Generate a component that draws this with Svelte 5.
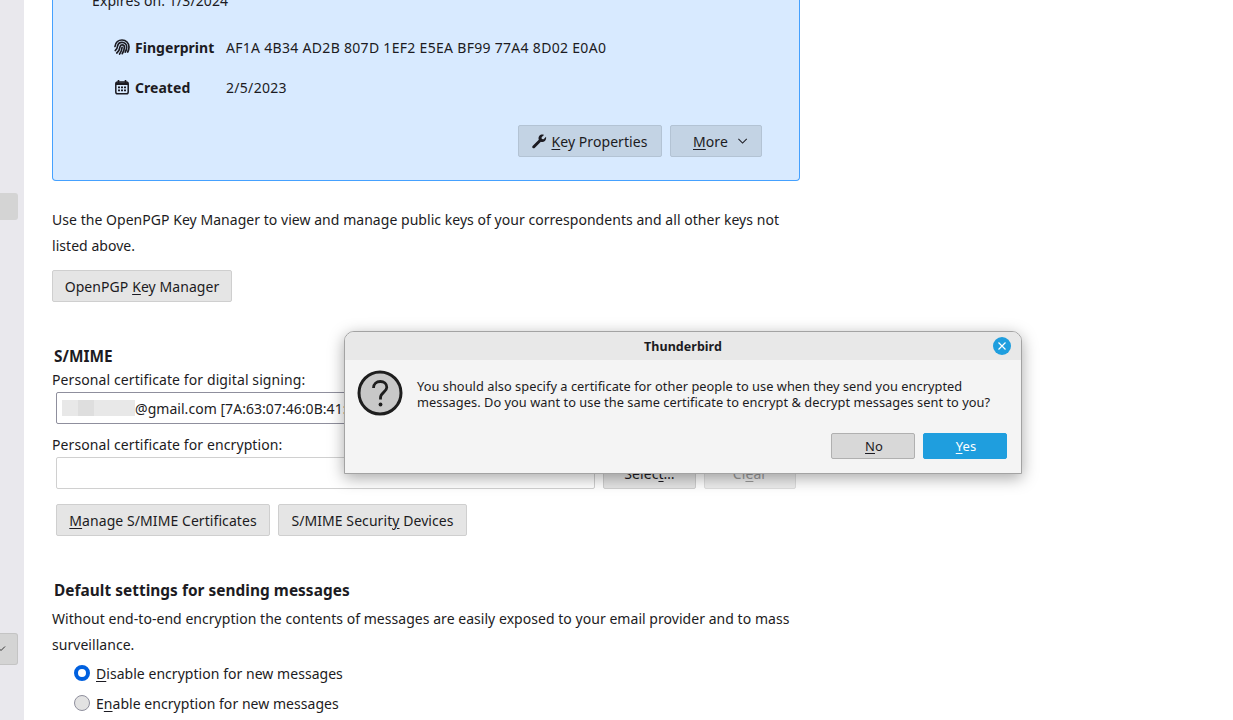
<script>
	const fingerprint = 'AF1A 4B34 AD2B 807D 1EF2 E5EA BF99 77A4 8D02 E0A0';
</script>

<div class="page">
	<aside class="side">
		<div class="side-item first"></div>
		<div class="side-item second">
			<svg width="10" height="10" viewBox="0 0 10 10" class="side-chev">
				<path d="M-3 2.5 1 6.5 5 2.5" fill="none" stroke="#333" stroke-width="1" />
			</svg>
		</div>
	</aside>

	<main class="main">
		<section class="card">
			<p class="expires">Expires on: 1/3/2024</p>
			<div class="meta">
				<svg width="16" height="16" viewBox="0 0 16 16" class="meta-icon">
					<g fill="none" stroke="#1c1b22" stroke-width="1.7" stroke-linecap="round">
						<path d="M1 7.500C1.500 3.500 4.500 1 8 1c4 0 7 3 7 7 0 1.800-.5 3.500-1.300 5" />
						<path d="M1.300 11.500C3 10.500 3.400 8.500 3.600 7 4 4.800 5.800 3.400 8 3.400c2.600 0 4.700 2 4.700 4.600 0 1.700-.5 3.500-1.400 5.200" />
						<path d="M2.800 14C4.800 12.500 5.700 10 6 7.800 6.200 6.600 7 5.800 8 5.800c1.400 0 2.400 1 2.400 2.300 0 2.300-.8 4.800-2.200 6.600" />
						<path d="M5.600 15C7 13.200 7.900 10.800 8.100 8.300" />
					</g>
				</svg>
				<span class="meta-label">Fingerprint</span>
				<span class="meta-value">{fingerprint}</span>
			</div>
			<div class="meta">
				<svg width="16" height="16" viewBox="0 0 16 16" class="meta-icon">
					<path d="M4.500 1v3M11.500 1v3" stroke="#1c1b22" stroke-width="1.600" fill="none" />
					<rect x="1.800" y="3" width="12.400" height="11.700" rx="1.800" fill="none" stroke="#1c1b22" stroke-width="1.500" />
					<path d="M2 3.500h12v2.500H2z" fill="#1c1b22" />
					<path d="M4 7.500h2v1.800H4zM7 7.500h2v1.800H7zM10 7.500h2v1.800h-2zM4 10.500h2v1.800H4zM7 10.500h2v1.800H7zM10 10.500h2v1.800h-2z" fill="#1c1b22" />
				</svg>
				<span class="meta-label">Created</span>
				<span class="meta-value">2/5/2023</span>
			</div>
			<div class="card-actions">
				<button class="btn on-card key-props">
					<svg width="15" height="15" viewBox="0 0 15 15">
						<path d="M14 2.800 11.600 5.200 9.800 5 9.600 3.200 12 .9C10.300.2 8.400.6 7.400 1.800 6.400 3 6.300 4.500 6.800 5.700L.8 11.700c-.7.700-.7 1.600-.1 2.200.6.600 1.500.6 2.200-.1l6-6c1.200.5 2.800.3 4-.8 1.100-1.100 1.500-2.800 1.100-4.200z" fill="#1c1b22" />
					</svg>
					<span><u>K</u>ey Properties</span>
				</button>
				<button class="btn on-card more">
					<span><u>M</u>ore</span>
					<svg width="12" height="12" viewBox="0 0 12 12">
						<path d="M1.500 3.800 6 8.300l4.500-4.500" fill="none" stroke="#1c1b22" stroke-width="1.100" />
					</svg>
				</button>
			</div>
		</section>

		<p class="para intro">
			Use the OpenPGP Key Manager to view and manage public keys of your correspondents and all other keys not listed above.
		</p>
		<button class="btn manager"><span>OpenPGP <u>K</u>ey Manager</span></button>

		<h2 class="heading smime">S/MIME</h2>
		<div class="field-label sign">Personal certificate for digital signing:</div>
		<div class="cert-row">
			<div class="cert-input strong">
				<span class="redacted"></span><span>@gmail.com [7A:63:07:46:0B:41:2C:9E:51:D0]</span>
			</div>
			<button class="btn row-btn select"><span>Selec<u>t</u>…</span></button>
			<button class="btn row-btn clear"><span>Cl<u>e</u>ar</span></button>
		</div>
		<div class="field-label encrypt">Personal certificate for encryption:</div>
		<div class="cert-row">
			<div class="cert-input"></div>
			<button class="btn row-btn select"><span>Selec<u>t</u>…</span></button>
			<button class="btn row-btn clear" disabled><span>Cl<u>e</u>ar</span></button>
		</div>
		<div class="manage-row">
			<button class="btn manage"><span><u>M</u>anage S/MIME Certificates</span></button>
			<button class="btn devices"><span>S/MIME Securit<u>y</u> Devices</span></button>
		</div>

		<h2 class="heading defaults">Default settings for sending messages</h2>
		<p class="para without">
			Without end-to-end encryption the contents of messages are easily exposed to your email provider and to mass surveillance.
		</p>
		<div class="radio-row first-radio">
			<span class="radio checked"></span>
			<span><u>D</u>isable encryption for new messages</span>
		</div>
		<div class="radio-row second-radio">
			<span class="radio"></span>
			<span>E<u>n</u>able encryption for new messages</span>
		</div>
	</main>

	<div class="dialog" role="dialog">
		<header class="dialog-head">
			<span class="dialog-title">Thunderbird</span>
			<span class="dialog-close">
				<svg width="10" height="10" viewBox="0 0 10 10">
					<path d="M1.500 1.500l7 7M8.500 1.500l-7 7" stroke="#fff" stroke-width="1.200" />
				</svg>
			</span>
		</header>
		<div class="dialog-body">
			<div class="dialog-msg">
				<svg width="46" height="46" viewBox="0 0 46 46" class="question">
					<circle cx="23" cy="23" r="21" fill="#c8c8c8" stroke="#1e1e1e" stroke-width="3" />
					<path d="M16.500 18c0-4 3-6.500 6.800-6.500 3.700 0 6.500 2.300 6.500 5.700 0 5-6.300 5-6.300 10.800v1.500" fill="none" stroke="#1e1e1e" stroke-width="2.800" />
					<circle cx="23.500" cy="34.500" r="1.900" fill="#1e1e1e" />
				</svg>
				<p>You should also specify a certificate for other people to use when they send you encrypted messages. Do you want to use the same certificate to encrypt &amp; decrypt messages sent to you?</p>
			</div>
			<div class="dialog-actions">
				<button class="dlg-btn no"><u>N</u>o</button>
				<button class="dlg-btn yes"><u>Y</u>es</button>
			</div>
		</div>
	</div>
</div>

<style>
	:global(body) {
		margin: 0;
		background: #fff;
	}

	.page {
		position: relative;
		display: flex;
		width: 1233px;
		height: 720px;
		overflow: hidden;
		font-family: 'Noto Sans', sans-serif;
		font-size: 14px;
		letter-spacing: 0.04px;
		color: #1c1b22;
	}

	button {
		font-family: inherit;
		color: inherit;
		letter-spacing: 0.07px;
	}

	u {
		text-underline-offset: 2px;
		text-decoration-thickness: 1px;
	}

	.side {
		flex: none;
		width: 24px;
		background: #e9e8ed;
	}

	.side-item {
		width: 18px;
		background: #d4d4d4;
		border-radius: 0 3px 3px 0;
	}

	.side-item.first {
		height: 27px;
		margin-top: 193px;
	}

	.side-item.second {
		height: 32px;
		margin-top: 413px;
		border: 1px solid #c4c4c4;
		border-left: 0;
		box-sizing: border-box;
		display: flex;
		align-items: center;
	}

	.side-chev {
		overflow: visible;
	}

	.main {
		flex: none;
		width: 748px;
		margin-left: 28px;
	}

	.card {
		display: flow-root;
		box-sizing: border-box;
		height: 181px;
		background: #d8eaff;
		border: 1px solid #45a1ff;
		border-top: 0;
		border-radius: 0 0 4px 4px;
		padding-left: 39px;
		padding-right: 37px;
	}

	.expires {
		margin: -9px 0 26px;
		line-height: 20px;
		letter-spacing: 0.1px;
	}

	.meta {
		display: flex;
		align-items: center;
		height: 20px;
		margin: 0 0 20px 22px;
	}

	.meta-icon {
		flex: none;
		margin-right: 5px;
	}

	.meta-label {
		flex: none;
		width: 91px;
		font-weight: 700;
	}

	.meta-value {
		white-space: nowrap;
		letter-spacing: 0.3px;
	}

	.card-actions {
		display: flex;
		justify-content: flex-end;
		gap: 8px;
		margin-top: 28px;
	}

	.btn {
		box-sizing: border-box;
		height: 32px;
		padding: 0 13px;
		display: inline-flex;
		align-items: center;
		justify-content: center;
		background: #e5e5e5;
		border: 1px solid #cfcfcf;
		border-radius: 2px;
		font-size: 14px;
		white-space: nowrap;
	}

	.btn.on-card {
		background: #c3d3e4;
		border-color: #b3c3d4;
	}

	.key-props {
		width: 144px;
		gap: 4px;
	}

	.more {
		width: 92px;
		gap: 9px;
		padding-left: 22px;
	}

	.para {
		margin: 0;
		line-height: 26px;
	}

	.intro {
		margin-top: 26px;
	}

	.manager {
		width: 180px;
		margin-top: 11px;
		display: flex;
	}

	.heading {
		margin: 0 0 0 2px;
		font-size: 15.4px;
		font-weight: 700;
		line-height: 22px;
	}

	.smime {
		margin-top: 44px;
	}

	.field-label {
		line-height: 20px;
		letter-spacing: 0.1px;
	}

	.sign {
		margin-top: 2px;
	}

	.encrypt {
		margin-top: 11px;
	}

	.cert-row {
		display: flex;
		gap: 8px;
		margin-left: 4px;
		margin-top: 2px;
	}

	.cert-input {
		box-sizing: border-box;
		width: 539px;
		height: 32px;
		padding-left: 5px;
		display: flex;
		align-items: center;
		background: #fff;
		border: 1px solid #d0d0d0;
		border-radius: 2px;
		overflow: hidden;
		white-space: nowrap;
	}

	.cert-input.strong {
		border-color: #8f8f9d;
	}

	.redacted {
		flex: none;
		width: 73px;
		height: 16px;
		background: linear-gradient(90deg, #e8e8e8 0 16px, #dedede 16px 32px, #e8e8e8 32px 73px);
	}

	.row-btn.select {
		width: 93px;
		padding: 0;
	}

	.row-btn.clear {
		width: 92px;
		padding: 0;
	}

	.row-btn.clear:disabled {
		color: #9a9a9a;
		background: #eeeeee;
		border-color: #dedede;
	}

	.manage-row {
		display: flex;
		gap: 8px;
		margin: 15px 0 0 4px;
	}

	.manage {
		width: 214px;
	}

	.devices {
		width: 189px;
	}

	.defaults {
		margin-top: 44px;
	}

	.without {
		margin-top: 4px;
	}

	.radio-row {
		display: flex;
		align-items: center;
		gap: 6px;
		height: 20px;
		margin-left: 22px;
	}

	.first-radio {
		margin-top: 5px;
	}

	.second-radio {
		margin-top: 10px;
	}

	.radio {
		box-sizing: border-box;
		width: 16px;
		height: 16px;
		border-radius: 50%;
		background: #e2e2e2;
		border: 1px solid #8f8f9d;
	}

	.radio.checked {
		background: #fff;
		border: 4px solid #0060df;
	}

	.dialog {
		position: absolute;
		left: 344px;
		top: 331px;
		box-sizing: border-box;
		width: 678px;
		height: 143px;
		border: 1px solid #a3a3a3;
		border-radius: 10px 10px 0 0;
		background: #f4f4f4;
		box-shadow: 0 4px 16px rgba(0, 0, 0, 0.35);
		overflow: hidden;
		font-size: 12.8px;
	}

	.dialog-head {
		position: relative;
		display: flex;
		align-items: center;
		justify-content: center;
		height: 28px;
		background: #e8e8e8;
	}

	.dialog-title {
		font-weight: 700;
		font-size: 12.5px;
	}

	.dialog-close {
		position: absolute;
		right: 10px;
		top: 5px;
		width: 18px;
		height: 18px;
		border-radius: 50%;
		background: #1f9ede;
		display: flex;
		align-items: center;
		justify-content: center;
	}

	.dialog-msg {
		display: flex;
		padding: 10px 14px 0 12px;
		height: 63px;
		box-sizing: border-box;
	}

	.question {
		flex: none;
		margin-right: 14px;
	}

	.dialog-msg p {
		margin: 8px 0 0;
		line-height: 16px;
		width: 590px;
	}

	.dialog-actions {
		display: flex;
		justify-content: flex-end;
		gap: 8px;
		padding: 10px 14px 0 0;
	}

	.dlg-btn {
		box-sizing: border-box;
		width: 84px;
		height: 26px;
		border-radius: 2px;
		font-size: 13px;
		padding: 0 0 0 2px;
	}

	.dlg-btn.no {
		background: #d8d8d8;
		border: 1px solid #b0b0b0;
	}

	.dlg-btn.yes {
		background: #1f9ede;
		border: 1px solid #1f9ede;
		color: #fff;
	}
</style>
